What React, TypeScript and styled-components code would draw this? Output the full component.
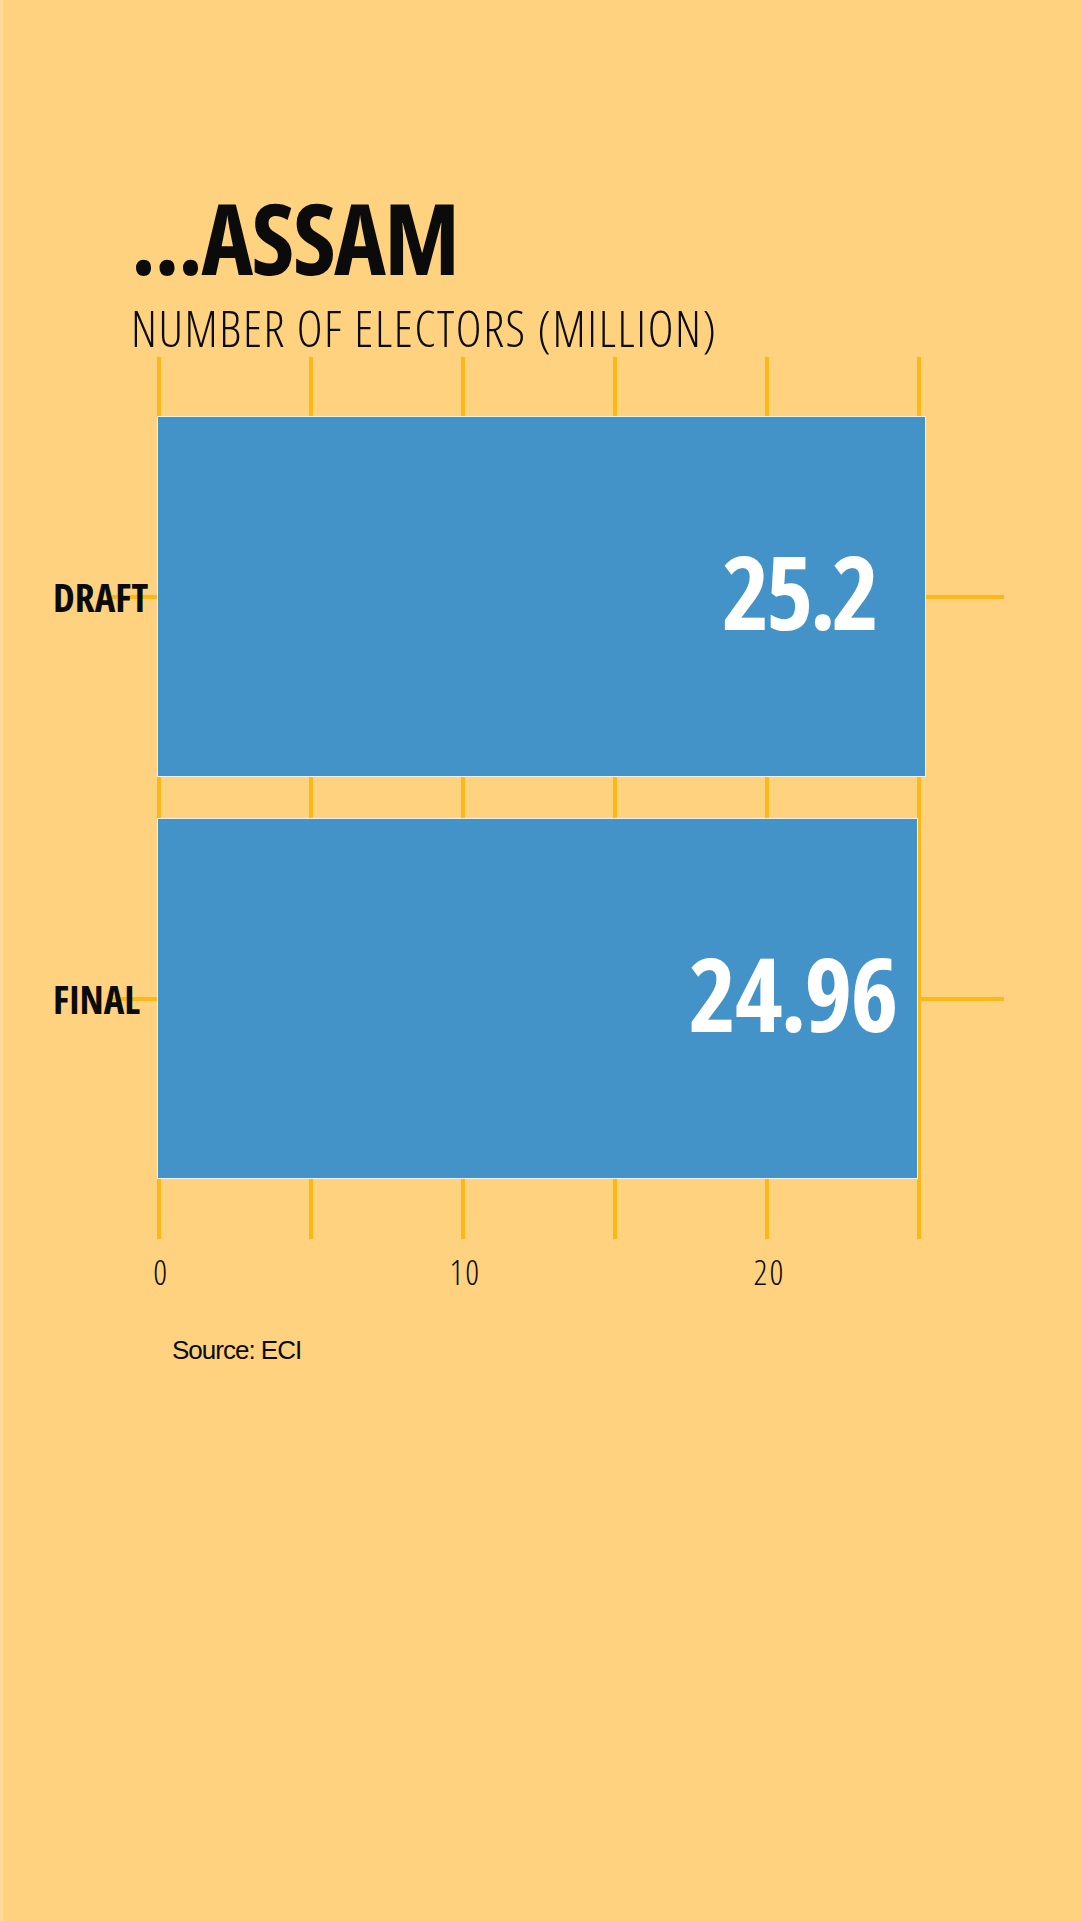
import React from "react";
import styled, { createGlobalStyle } from "styled-components";

const BG = "#fed27f";
const BAR = "#4393c8";
const TICK = "#fbb817";
const UNIT = 30.42;

const Global = createGlobalStyle`
  html, body { margin: 0; padding: 0; background: ${BG}; }
  #root { width: 1081px; }
`;

const Page = styled.div`
  box-sizing: border-box;
  width: 1081px;
  min-height: 1921px;
  background: ${BG};
  border-left: 3px solid #fedb98;
  padding-top: 188px;
  display: flex;
  flex-direction: column;
  color: #0b0b0b;
`;

const Header = styled.header`
  padding-left: 128px;
  display: flex;
  flex-direction: column;
  gap: 18px;
`;

const Title = styled.h1`
  margin: 0;
  font-family: "Open Sans", "Noto Sans", sans-serif;
  font-stretch: 75%;
  font-weight: 700;
  font-size: 98px;
  letter-spacing: -1.5px;
  line-height: 1;
`;

const Subtitle = styled.h2`
  margin: 0;
  font-family: "Open Sans", "Noto Sans", sans-serif;
  font-stretch: 75%;
  font-weight: 300;
  font-size: 49px;
  letter-spacing: 1.6px;
  line-height: 1;
`;

const Chart = styled.div`
  margin-top: 4px;
  display: grid;
  grid-template-columns: 154px 772px 1fr;
  grid-template-rows: 59px 361px 41px 361px 60px;
`;

const Ticks = styled.div`
  grid-column: 2;
  grid-row: 1 / -1;
  background: repeating-linear-gradient(
    to right,
    ${TICK} 0 4px,
    transparent 4px ${UNIT * 5}px
  );
`;

const GridLine = styled.div<{ $row: number }>`
  grid-column: 1 / -1;
  grid-row: ${(p) => p.$row};
  align-self: center;
  height: 4px;
  margin-left: 109px;
  width: 892px;
  background: ${TICK};
`;

const Label = styled.div<{ $row: number }>`
  grid-column: 1;
  grid-row: ${(p) => p.$row};
  align-self: center;
  padding-left: 50px;
  font-family: "Open Sans", "Noto Sans", sans-serif;
  font-stretch: 75%;
  font-weight: 700;
  font-size: 39px;
  line-height: 1;
  position: relative;
`;

const Bar = styled.div<{ $row: number; $inset: number }>`
  grid-column: 2 / -1;
  grid-row: ${(p) => p.$row};
  box-sizing: border-box;
  background: ${BAR};
  border: 1px solid #eef0ea;
  display: flex;
  align-items: center;
  justify-content: flex-end;
  padding-right: ${(p) => p.$inset}px;
  position: relative;
`;

const Value = styled.span<{ $tracking: number }>`
  font-family: "Open Sans", "Noto Sans", sans-serif;
  font-stretch: 75%;
  font-weight: 700;
  font-size: 102px;
  letter-spacing: ${(p) => p.$tracking}px;
  line-height: 1;
  color: #ffffff;
  transform: translateY(-6px);
`;

const Axis = styled.div`
  margin-top: 16px;
  padding-left: 6px;
  display: flex;
`;

const AxisLabel = styled.span`
  width: ${UNIT * 10}px;
  text-align: center;
  font-family: "Open Sans", "Noto Sans", sans-serif;
  font-stretch: 75%;
  font-weight: 300;
  font-size: 34px;
  letter-spacing: 2px;
  line-height: 1;
`;

const Source = styled.p`
  margin: 48px 0 0 169px;
  font-family: "Liberation Sans", Arial, sans-serif;
  font-size: 26px;
  letter-spacing: -1px;
  line-height: 1;
`;

const data = [
  { label: "DRAFT", value: 25.2, row: 2, inset: 49, tracking: -4 },
  { label: "FINAL", value: 24.96, row: 4, inset: 21, tracking: -2 },
];

export default function App() {
  return (
    <>
      <Global />
      <Page>
        <Header>
          <Title>...ASSAM</Title>
          <Subtitle>NUMBER OF ELECTORS (MILLION)</Subtitle>
        </Header>
        <Chart>
          <Ticks />
          {data.map((d) => (
            <GridLine key={"g" + d.label} $row={d.row} />
          ))}
          {data.map((d) => (
            <React.Fragment key={d.label}>
              <Label $row={d.row}>{d.label}</Label>
              <Bar
                $row={d.row}
                $inset={d.inset}
                style={{ width: `${d.value * UNIT + 2}px` }}
              >
                <Value $tracking={d.tracking}>{d.value}</Value>
              </Bar>
            </React.Fragment>
          ))}
        </Chart>
        <Axis>
          <AxisLabel>0</AxisLabel>
          <AxisLabel>10</AxisLabel>
          <AxisLabel>20</AxisLabel>
        </Axis>
        <Source>Source: ECI</Source>
      </Page>
    </>
  );
}
